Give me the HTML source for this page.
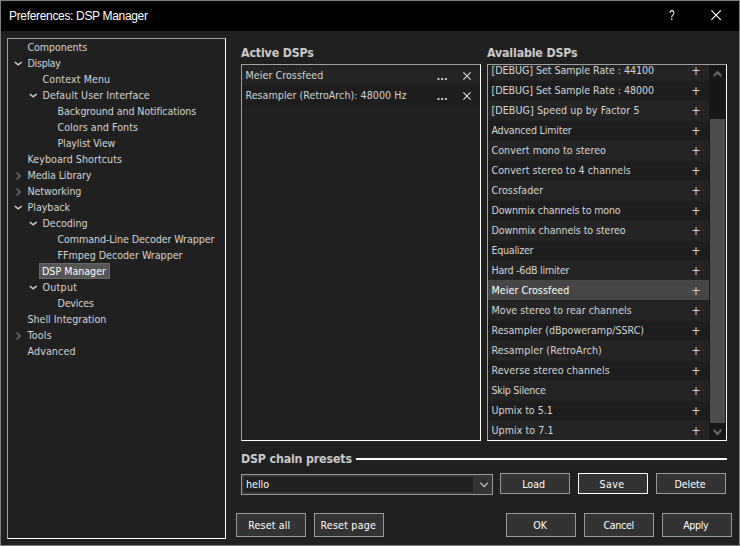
<!DOCTYPE html>
<html><head><meta charset="utf-8"><title>Preferences: DSP Manager</title>
<style>
*{box-sizing:border-box;margin:0;padding:0}
html,body{width:740px;height:546px;overflow:hidden;background:#202020}
body{position:relative;font-family:"DejaVu Sans Condensed","DejaVu Sans","Liberation Sans",sans-serif;font-stretch:condensed;font-size:10.6px;color:#d4d4d4}
.abs{position:absolute}
#win{position:absolute;left:0;top:0;width:740px;height:546px;border:1px solid #808080;background:#202020}
#title{position:absolute;left:1px;top:1px;width:738px;height:30px;background:#000;color:#fff}
#title .t{position:absolute;left:8px;top:7px;font-family:"Liberation Sans",sans-serif;font-size:12px;font-stretch:normal;line-height:16px;white-space:nowrap;letter-spacing:-0.33px}
.box{position:absolute;border:1px solid #a0a0a0;border-right-color:#fff;border-bottom-color:#fff;background:#202020;overflow:hidden}
.ti{position:absolute;height:16px;line-height:16px;white-space:nowrap}
.sel{background:#555;outline:1px solid #666;outline-offset:-1px;color:#fff;padding:0 3px}
.h{position:absolute;font-weight:bold;font-size:12.3px;letter-spacing:-0.15px;line-height:16px;color:#cacaca;white-space:nowrap}
.row{position:absolute;left:0;height:20px;line-height:20px;white-space:nowrap;padding-left:3.5px}
.ev,.od{background:none}
.hl{background:#464646;color:#fff;box-shadow:inset 0 0 0 1px #494949}
.btn{position:absolute;border:1px solid #9b9b9b;background:#333;color:#fff;text-align:center;line-height:19px;height:21px;width:70px;white-space:nowrap}
.btn.f{border-color:#fff}
.b2{height:24px;line-height:22px}
svg{position:absolute;overflow:visible}
</style></head><body>
<div id="win"></div>
<div id="title"><div class="t">Preferences: DSP Manager</div>
<div class="t" style="left:666.5px;top:6px;font-size:14px;letter-spacing:0;transform:scaleX(0.74);transform-origin:50% 50%;will-change:transform">?</div>
<svg style="left:710px;top:9px" width="11" height="11"><path d="M0.4 0.4 L9.8 9.8 M9.8 0.4 L0.4 9.8" stroke="#fff" stroke-width="1.15" fill="none"/></svg>
</div>
<div class="box" id="tree" style="left:7px;top:38px;width:219px;height:501px"></div>

<div class="ti" style="left:27.5px;top:39px;letter-spacing:-0.070px">Components</div>
<svg style="left:13.8px;top:61px" width="9" height="5"><path d="M0.7 1 L4.2 3.9 L7.7 1" stroke="#d0d0d0" stroke-width="1.5" fill="none"/></svg>
<div class="ti" style="left:27.5px;top:55px;letter-spacing:-0.271px">Display</div>
<div class="ti" style="left:42.5px;top:71px;letter-spacing:0.100px">Context Menu</div>
<svg style="left:28.8px;top:93px" width="9" height="5"><path d="M0.7 1 L4.2 3.9 L7.7 1" stroke="#d0d0d0" stroke-width="1.5" fill="none"/></svg>
<div class="ti" style="left:42.5px;top:87px;letter-spacing:0.091px">Default User Interface</div>
<div class="ti" style="left:57.5px;top:103px;letter-spacing:-0.064px">Background and Notifications</div>
<div class="ti" style="left:57.5px;top:119px;letter-spacing:0.062px">Colors and Fonts</div>
<div class="ti" style="left:57.5px;top:135px;letter-spacing:-0.131px">Playlist View</div>
<div class="ti" style="left:27.5px;top:151px;letter-spacing:0.067px">Keyboard Shortcuts</div>
<svg style="left:16px;top:172px" width="5" height="8"><path d="M0.6 0.6 L3.9 4 L0.6 7.4" stroke="#707070" stroke-width="1.5" fill="none"/></svg>
<div class="ti" style="left:27.5px;top:167px;letter-spacing:-0.085px">Media Library</div>
<svg style="left:16px;top:188px" width="5" height="8"><path d="M0.6 0.6 L3.9 4 L0.6 7.4" stroke="#707070" stroke-width="1.5" fill="none"/></svg>
<div class="ti" style="left:27.5px;top:183px;letter-spacing:-0.070px">Networking</div>
<svg style="left:13.8px;top:205px" width="9" height="5"><path d="M0.7 1 L4.2 3.9 L7.7 1" stroke="#d0d0d0" stroke-width="1.5" fill="none"/></svg>
<div class="ti" style="left:27.5px;top:199px">Playback</div>
<svg style="left:28.8px;top:221px" width="9" height="5"><path d="M0.7 1 L4.2 3.9 L7.7 1" stroke="#d0d0d0" stroke-width="1.5" fill="none"/></svg>
<div class="ti" style="left:42.5px;top:215px">Decoding</div>
<div class="ti" style="left:57.5px;top:231px;letter-spacing:-0.082px">Command-Line Decoder Wrapper</div>
<div class="ti" style="left:57.5px;top:247px">FFmpeg Decoder Wrapper</div>
<div class="ti sel" style="left:39px;top:263px;width:71px">DSP Manager</div>
<svg style="left:28.8px;top:285px" width="9" height="5"><path d="M0.7 1 L4.2 3.9 L7.7 1" stroke="#d0d0d0" stroke-width="1.5" fill="none"/></svg>
<div class="ti" style="left:42.5px;top:279px;letter-spacing:0.267px">Output</div>
<div class="ti" style="left:57.5px;top:295px;letter-spacing:-0.200px">Devices</div>
<div class="ti" style="left:27.5px;top:311px">Shell Integration</div>
<svg style="left:16px;top:332px" width="5" height="8"><path d="M0.6 0.6 L3.9 4 L0.6 7.4" stroke="#707070" stroke-width="1.5" fill="none"/></svg>
<div class="ti" style="left:27.5px;top:327px;letter-spacing:0.220px">Tools</div>
<div class="ti" style="left:27.5px;top:343px;letter-spacing:0.125px">Advanced</div>

<div class="h" style="left:241px;top:45px">Active DSPs</div>
<div class="h" style="left:487px;top:45px">Available DSPs</div>
<div class="box" id="act" style="left:241px;top:64px;width:240px;height:377px">
 <div class="abs" style="left:0;top:0;width:238px;height:45px;background:linear-gradient(to bottom,#242424 0,#242424 18.5px,#1d1d1d 21.5px,#1d1d1d 38.5px,#202020 41.5px)"></div>
 <div class="row ev" style="top:0;width:238px;letter-spacing:0.073px">Meier Crossfeed</div>
 <div class="row od" style="top:20px;width:238px;letter-spacing:0.045px">Resampler (RetroArch): 48000 Hz</div>

<div class="abs" style="left:194.5px;top:2px;line-height:20px;letter-spacing:0;font-weight:bold;font-size:11px">...</div>
<svg style="left:221px;top:7px" width="8" height="8"><path d="M0.4 0.4 L7.6 7.6 M7.6 0.4 L0.4 7.6" stroke="#dcdcdc" stroke-width="1.15" fill="none"/></svg>
<div class="abs" style="left:194.5px;top:22px;line-height:20px;letter-spacing:0;font-weight:bold;font-size:11px">...</div>
<svg style="left:221px;top:27px" width="8" height="8"><path d="M0.4 0.4 L7.6 7.6 M7.6 0.4 L0.4 7.6" stroke="#dcdcdc" stroke-width="1.15" fill="none"/></svg>
</div>
<div class="box" id="avail" style="left:487px;top:64px;width:240px;height:377px">
<div class="abs" style="left:0;top:-43.5px;width:221px;height:460px;background:repeating-linear-gradient(to bottom,#242424 0,#242424 17px,#1d1d1d 20px,#1d1d1d 37px,#242424 40px)"></div>
<div class="row ev" style="top:-5px;width:221px;letter-spacing:-0.032px">[DEBUG] Set Sample Rate : 44100</div>
<div class="abs" style="left:200px;top:-4px;width:16px;text-align:center;line-height:20px;font-size:12.5px">+</div>
<div class="row od" style="top:15px;width:221px;letter-spacing:-0.032px">[DEBUG] Set Sample Rate : 48000</div>
<div class="abs" style="left:200px;top:16px;width:16px;text-align:center;line-height:20px;font-size:12.5px">+</div>
<div class="row ev" style="top:35px;width:221px;letter-spacing:0.086px">[DEBUG] Speed up by Factor 5</div>
<div class="abs" style="left:200px;top:36px;width:16px;text-align:center;line-height:20px;font-size:12.5px">+</div>
<div class="row od" style="top:55px;width:221px;letter-spacing:-0.219px">Advanced Limiter</div>
<div class="abs" style="left:200px;top:56px;width:16px;text-align:center;line-height:20px;font-size:12.5px">+</div>
<div class="row ev" style="top:75px;width:221px;letter-spacing:0.055px">Convert mono to stereo</div>
<div class="abs" style="left:200px;top:76px;width:16px;text-align:center;line-height:20px;font-size:12.5px">+</div>
<div class="row od" style="top:95px;width:221px;letter-spacing:0.046px">Convert stereo to 4 channels</div>
<div class="abs" style="left:200px;top:96px;width:16px;text-align:center;line-height:20px;font-size:12.5px">+</div>
<div class="row ev" style="top:115px;width:221px;letter-spacing:0.060px">Crossfader</div>
<div class="abs" style="left:200px;top:116px;width:16px;text-align:center;line-height:20px;font-size:12.5px">+</div>
<div class="row od" style="top:135px;width:221px;letter-spacing:-0.162px">Downmix channels to mono</div>
<div class="abs" style="left:200px;top:136px;width:16px;text-align:center;line-height:20px;font-size:12.5px">+</div>
<div class="row ev" style="top:155px;width:221px;letter-spacing:-0.069px">Downmix channels to stereo</div>
<div class="abs" style="left:200px;top:156px;width:16px;text-align:center;line-height:20px;font-size:12.5px">+</div>
<div class="row od" style="top:175px;width:221px;letter-spacing:-0.256px">Equalizer</div>
<div class="abs" style="left:200px;top:176px;width:16px;text-align:center;line-height:20px;font-size:12.5px">+</div>
<div class="row ev" style="top:195px;width:221px;letter-spacing:-0.235px">Hard -6dB limiter</div>
<div class="abs" style="left:200px;top:196px;width:16px;text-align:center;line-height:20px;font-size:12.5px">+</div>
<div class="row hl" style="top:215px;width:221px;letter-spacing:0.073px">Meier Crossfeed</div>
<div class="abs" style="left:200px;top:216px;width:16px;text-align:center;line-height:20px;font-size:12.5px">+</div>
<div class="row ev" style="top:235px;width:221px;letter-spacing:0.039px">Move stereo to rear channels</div>
<div class="abs" style="left:200px;top:236px;width:16px;text-align:center;line-height:20px;font-size:12.5px">+</div>
<div class="row od" style="top:255px;width:221px;letter-spacing:0.007px">Resampler (dBpoweramp/SSRC)</div>
<div class="abs" style="left:200px;top:256px;width:16px;text-align:center;line-height:20px;font-size:12.5px">+</div>
<div class="row ev" style="top:275px;width:221px;letter-spacing:0.124px">Resampler (RetroArch)</div>
<div class="abs" style="left:200px;top:276px;width:16px;text-align:center;line-height:20px;font-size:12.5px">+</div>
<div class="row od" style="top:295px;width:221px;letter-spacing:0.057px">Reverse stereo channels</div>
<div class="abs" style="left:200px;top:296px;width:16px;text-align:center;line-height:20px;font-size:12.5px">+</div>
<div class="row ev" style="top:315px;width:221px;letter-spacing:-0.300px">Skip Silence</div>
<div class="abs" style="left:200px;top:316px;width:16px;text-align:center;line-height:20px;font-size:12.5px">+</div>
<div class="row od" style="top:335px;width:221px">Upmix to 5.1</div>
<div class="abs" style="left:200px;top:336px;width:16px;text-align:center;line-height:20px;font-size:12.5px">+</div>
<div class="row ev" style="top:355px;width:221px;letter-spacing:0.058px">Upmix to 7.1</div>
<div class="abs" style="left:200px;top:356px;width:16px;text-align:center;line-height:20px;font-size:12.5px">+</div>
<div class="abs" style="left:221px;top:0;width:17px;height:375px;background:#171717"></div>
<div class="abs" style="left:222px;top:54px;width:15px;height:304px;background:#4d4d4d"></div>
<svg style="left:221px;top:0" width="17" height="17"><path d="M4.6 12.5 V9.4 L8.5 5.6 L12.4 9.4 V12.5 L8.5 8.8 Z" fill="#676767"/></svg>
<svg style="left:221px;top:358px" width="17" height="17"><path d="M4.6 5.5 V8.6 L8.5 12.4 L12.4 8.6 V5.5 L8.5 9.2 Z" fill="#676767"/></svg>
</div>

<div class="h" style="left:241px;top:451px">DSP chain presets</div>
<div class="abs" style="left:356px;top:458px;width:371px;height:2px;background:#fff"></div>
<div class="abs" style="left:241px;top:474px;width:252px;height:21px;border:1px solid #9b9b9b;background:#333"></div>
<div class="abs" style="left:244px;top:477px;width:229px;height:15px;background:#202020;line-height:15px;padding-left:2px;color:#fff">hello</div>
<svg style="left:480px;top:482px" width="9" height="6"><path d="M0.4 0.6 L4.2 4.6 L8 0.6" stroke="#c8c8c8" stroke-width="1.2" fill="none"/></svg>

<div class="btn" style="left:500px;top:473px;height:21px"><span style="position:absolute;left:21.20px;top:4px;line-height:13px;letter-spacing:0.000px">Load</span></div>
<div class="btn f" style="left:578px;top:473px;height:21px"><span style="position:absolute;left:20.40px;top:4px;line-height:13px;letter-spacing:0.467px">Save</span></div>
<div class="btn" style="left:656px;top:473px;height:21px"><span style="position:absolute;left:17.40px;top:4px;line-height:13px;letter-spacing:0.000px">Delete</span></div>
<div class="btn" style="left:236px;top:513px;height:24px"><span style="position:absolute;left:11.30px;top:5px;line-height:13px;letter-spacing:0.137px">Reset all</span></div>
<div class="btn" style="left:314px;top:513px;height:24px"><span style="position:absolute;left:5.50px;top:5px;line-height:13px;letter-spacing:0.211px">Reset page</span></div>
<div class="btn" style="left:506px;top:513px;height:24px"><span style="position:absolute;left:26.20px;top:5px;line-height:13px;letter-spacing:0.000px">OK</span></div>
<div class="btn" style="left:584px;top:513px;height:24px"><span style="position:absolute;left:18.40px;top:5px;line-height:13px;letter-spacing:-0.320px">Cancel</span></div>
<div class="btn" style="left:662px;top:513px;height:24px"><span style="position:absolute;left:20.20px;top:5px;line-height:13px;letter-spacing:-0.350px">Apply</span></div>

</body></html>
